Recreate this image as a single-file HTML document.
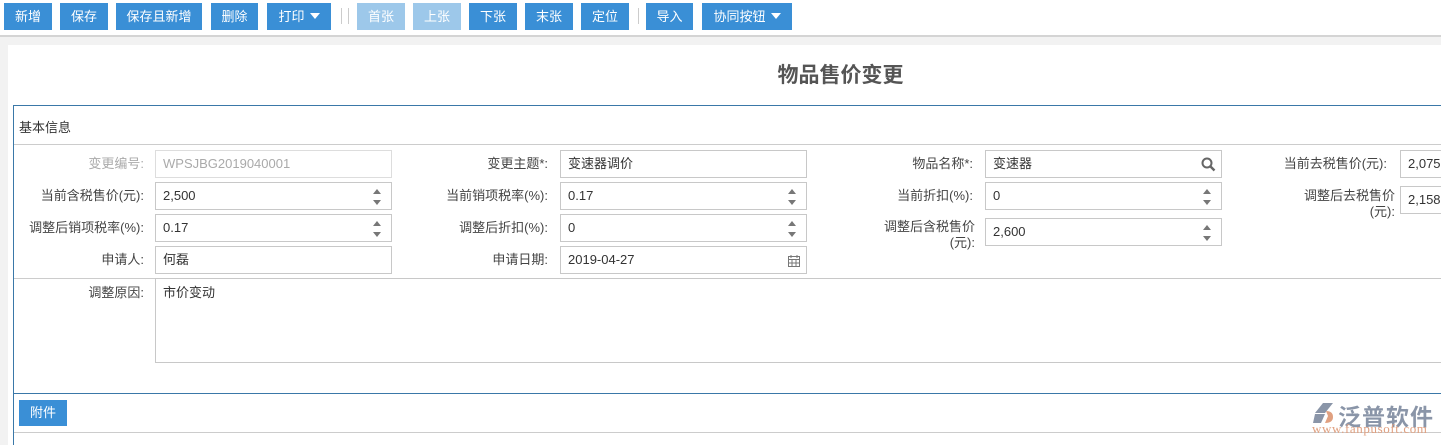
<!DOCTYPE html>
<html><head><meta charset="utf-8"><style>
*{box-sizing:border-box;margin:0;padding:0}
body{width:1441px;height:445px;overflow:hidden;background:#fff;font-family:"Liberation Sans","Noto Sans CJK SC",sans-serif;font-size:13px;color:#333;position:relative}
.a{position:absolute}
.btn{position:absolute;top:3px;height:27px;background:#3a8fd6;color:#fff;font-size:13px;line-height:27px;text-align:center}
.dis{background:#9dc8ea}
.sep{position:absolute;top:8px;width:1px;height:16px;background:#ccc}
.lbl{position:absolute;text-align:right;font-size:13px;color:#444;line-height:16px}
.inp{position:absolute;height:28px;border:1px solid #c8c8c8;background:#fff;line-height:26px;padding-left:7px;font-size:13px;color:#333;overflow:hidden;white-space:nowrap}
.sp{position:absolute;right:10px;top:6px;width:0;height:0;border-left:4px solid transparent;border-right:4px solid transparent;border-bottom:5px solid #777}
.sp2{position:absolute;right:10px;top:17px;width:0;height:0;border-left:4px solid transparent;border-right:4px solid transparent;border-top:5px solid #777}
.tri{display:inline-block;width:0;height:0;border-left:5px solid transparent;border-right:5px solid transparent;border-top:6px solid #fff;margin-left:5px;vertical-align:2px}
</style></head><body>
<div class="btn" style="left:4px;width:48px">新增</div>
<div class="btn" style="left:60px;width:48px">保存</div>
<div class="btn" style="left:116px;width:86px">保存且新增</div>
<div class="btn" style="left:211px;width:47px">删除</div>
<div class="btn" style="left:267px;width:64px">打印<span class="tri"></span></div>
<div class="sep" style="left:341px"></div><div class="sep" style="left:348px"></div>
<div class="btn dis" style="left:357px;width:48px">首张</div>
<div class="btn dis" style="left:413px;width:48px">上张</div>
<div class="btn" style="left:469px;width:48px">下张</div>
<div class="btn" style="left:525px;width:48px">末张</div>
<div class="btn" style="left:581px;width:48px">定位</div>
<div class="sep" style="left:638px"></div>
<div class="btn" style="left:646px;width:47px">导入</div>
<div class="btn" style="left:702px;width:90px">协同按钮<span class="tri"></span></div>
<div class="a" style="left:0;top:35px;width:1441px;height:2px;background:#d4d4d4"></div>
<div class="a" style="left:0;top:37px;width:1441px;height:8px;background:#f2f2f2"></div>
<div class="a" style="left:0;top:37px;width:8px;height:408px;background:#f2f2f2"></div>
<div class="a" style="left:0;width:100%;text-align:center;top:59px;padding-left:240px;font-size:21px;font-weight:bold;color:#555">物品售价变更</div>
<div class="a" style="left:13px;top:105px;width:1428px;height:1px;background:#3a78a8"></div>
<div class="a" style="left:13px;top:105px;width:1px;height:340px;background:#3a78a8"></div>
<div class="a" style="left:19px;top:117px;font-size:13px;color:#333">基本信息</div>
<div class="a" style="left:14px;top:144px;width:1427px;height:1px;background:#ccc"></div>

<div class="lbl" style="left:20px;width:124px;top:156px;color:#aaa">变更编号:</div>
<div class="inp" style="left:155px;top:150px;width:237px;color:#aaa;border-color:#ddd">WPSJBG2019040001</div>
<div class="lbl" style="left:400px;width:148px;top:156px">变更主题*:</div>
<div class="inp" style="left:560px;top:150px;width:247px">变速器调价</div>
<div class="lbl" style="left:820px;width:153px;top:156px">物品名称*:</div>
<div class="inp" style="left:985px;top:150px;width:237px">变速器<svg class="a" style="right:5px;top:6px" width="15" height="15" viewBox="0 0 15 15"><circle cx="6" cy="6" r="4.5" fill="none" stroke="#666" stroke-width="2"/><path d="M9.5 9.5L13.5 13.5" stroke="#666" stroke-width="2.4"/></svg></div>
<div class="lbl" style="left:1240px;width:147px;top:156px">当前去税售价(元):</div>
<div class="inp" style="left:1400px;top:150px;width:60px">2,075</div>

<div class="lbl" style="left:10px;width:134px;top:188px">当前含税售价(元):</div>
<div class="inp" style="left:155px;top:182px;width:237px">2,500<i class="sp"></i><i class="sp2"></i></div>
<div class="lbl" style="left:400px;width:148px;top:188px">当前销项税率(%):</div>
<div class="inp" style="left:560px;top:182px;width:247px">0.17<i class="sp"></i><i class="sp2"></i></div>
<div class="lbl" style="left:820px;width:153px;top:188px">当前折扣(%):</div>
<div class="inp" style="left:985px;top:182px;width:237px">0<i class="sp"></i><i class="sp2"></i></div>
<div class="lbl" style="left:1240px;width:155px;top:188px">调整后去税售价<br>(元):</div>
<div class="inp" style="left:1400px;top:186px;width:60px">2,158</div>

<div class="lbl" style="left:10px;width:134px;top:220px">调整后销项税率(%):</div>
<div class="inp" style="left:155px;top:214px;width:237px">0.17<i class="sp"></i><i class="sp2"></i></div>
<div class="lbl" style="left:400px;width:148px;top:220px">调整后折扣(%):</div>
<div class="inp" style="left:560px;top:214px;width:247px">0<i class="sp"></i><i class="sp2"></i></div>
<div class="lbl" style="left:820px;width:155px;top:219px">调整后含税售价<br>(元):</div>
<div class="inp" style="left:985px;top:218px;width:237px">2,600<i class="sp"></i><i class="sp2"></i></div>

<div class="lbl" style="left:10px;width:134px;top:252px">申请人:</div>
<div class="inp" style="left:155px;top:246px;width:237px">何磊</div>
<div class="lbl" style="left:400px;width:148px;top:252px">申请日期:</div>
<div class="inp" style="left:560px;top:246px;width:247px">2019-04-27<svg class="a" style="right:6px;top:8px" width="12" height="12" viewBox="0 0 12 12"><rect x="0.5" y="1.5" width="11" height="10" fill="none" stroke="#777"/><path d="M0.5 4.5H11.5M3 0V3M9 0V3M4 4.5V11.5M8 4.5V11.5M0.5 8H11.5" stroke="#777"/></svg></div>

<div class="lbl" style="left:10px;width:134px;top:285px">调整原因:</div>
<div class="inp" style="left:155px;top:278px;width:1300px;height:85px;line-height:16px;padding-top:6px">市价变动</div>
<div class="a" style="left:14px;top:278px;width:141px;height:1px;background:#ccc"></div>

<div class="a" style="left:13px;top:393px;width:1428px;height:1px;background:#3a78a8"></div>
<div class="btn" style="left:19px;top:400px;width:48px;height:26px;line-height:26px">附件</div>
<div class="a" style="left:14px;top:432px;width:1427px;height:1px;background:#ccc"></div>
<svg class="a" style="left:1311px;top:401px" width="26" height="24" viewBox="0 0 26 24"><path d="M12 2L22 2L14 12L4 12Z" fill="#8a95a8"/><path d="M4 13L14 13L10 22L2 22Z" fill="#8a95a8"/><path d="M15 10Q22 10 22 16Q22 22 14 22L17 15Z" fill="#e0a080"/></svg>
<div class="a" style="left:1338px;top:398px;font-size:23px;color:#8a95a8;letter-spacing:1px;font-weight:bold">泛普软件</div>
<div class="a" style="left:1312px;top:421px;font-size:13px;color:#e0a080;font-family:'Liberation Serif',serif;letter-spacing:0.6px">www.fanpusoft.com</div>
</body></html>
